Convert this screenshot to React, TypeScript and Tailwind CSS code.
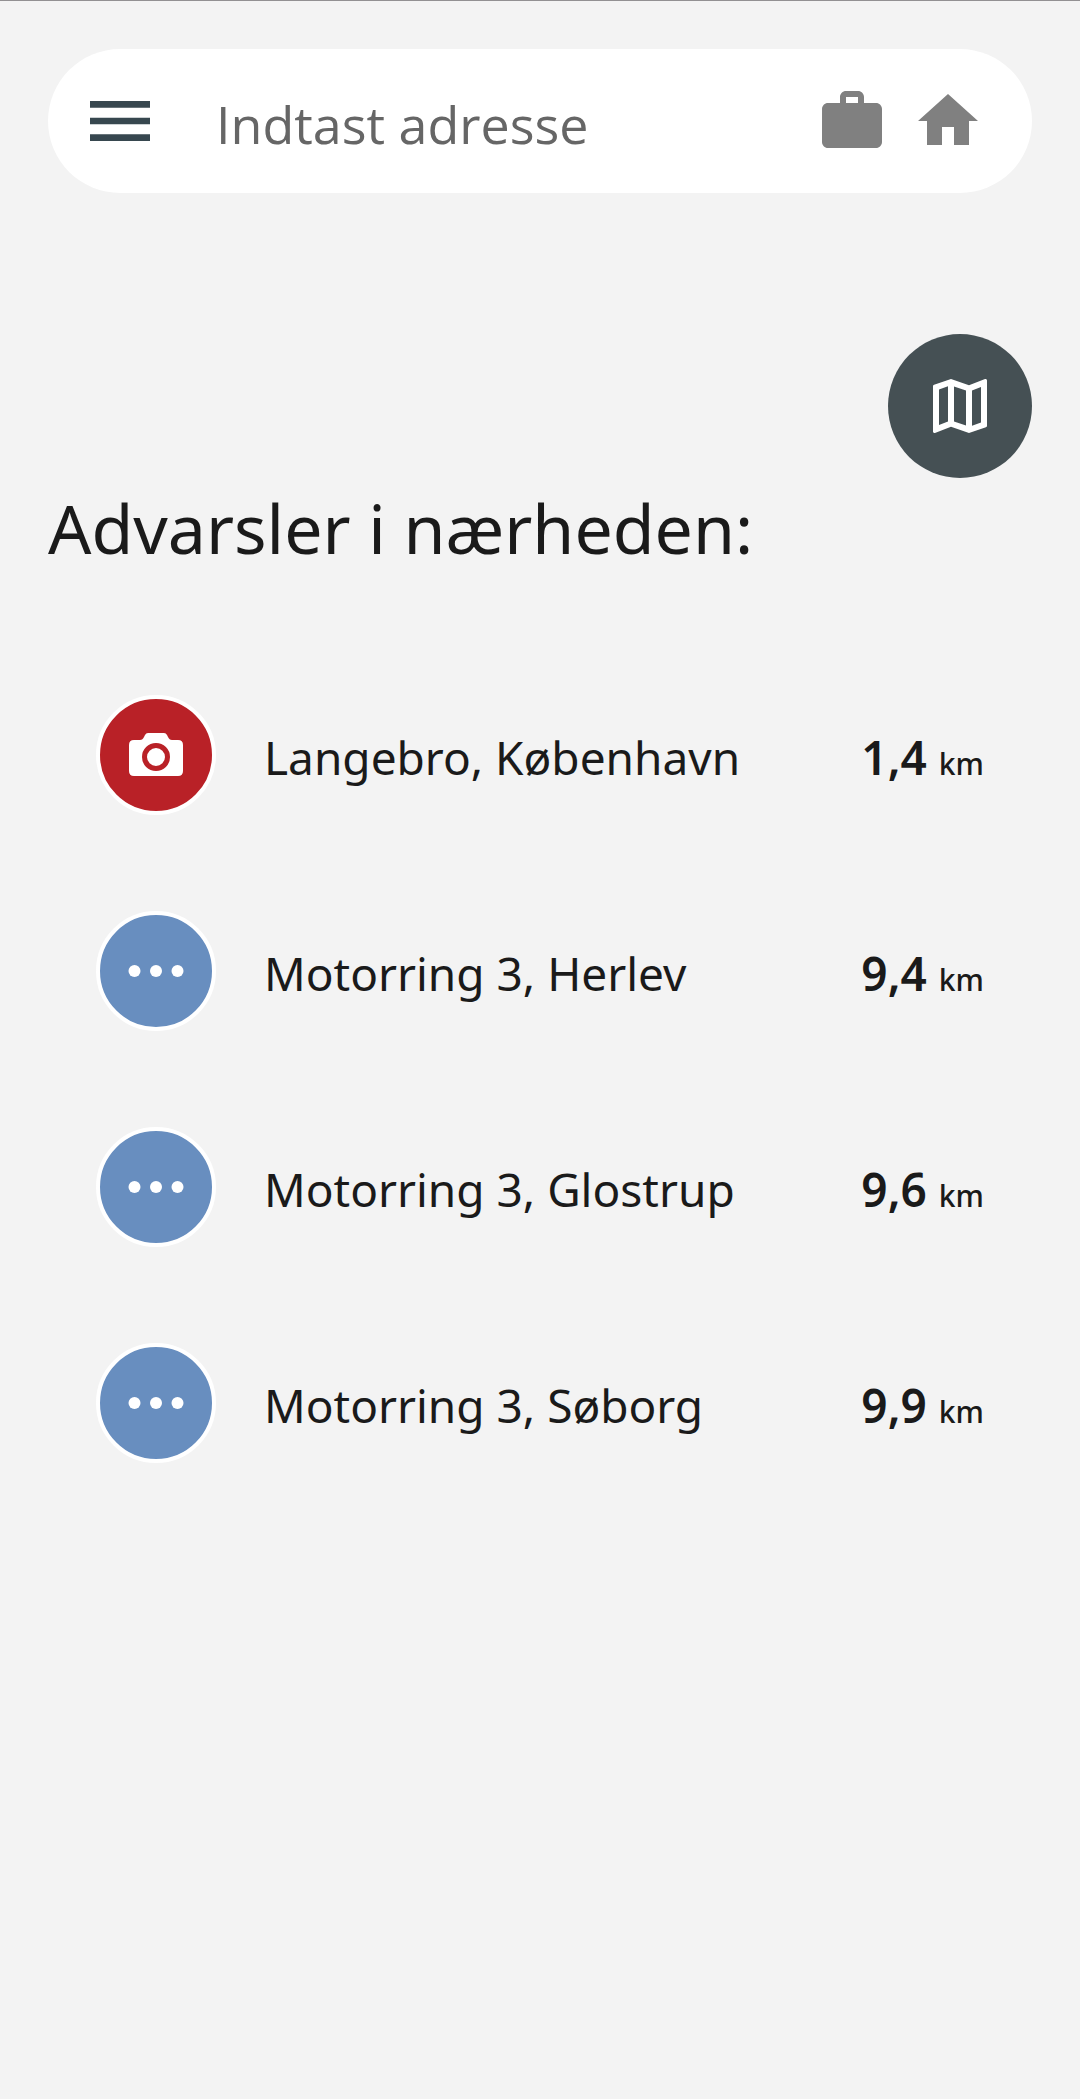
import React, { useState } from 'react';
import { MdHome, MdMenu, MdOutlineMap, MdWork } from 'react-icons/md';

type WarningType = 'camera' | 'other';

interface Warning {
  type: WarningType;
  place: string;
  distance: string;
}

const warnings: Warning[] = [
  { type: 'camera', place: 'Langebro, København', distance: '1,4' },
  { type: 'other', place: 'Motorring 3, Herlev', distance: '9,4' },
  { type: 'other', place: 'Motorring 3, Glostrup', distance: '9,6' },
  { type: 'other', place: 'Motorring 3, Søborg', distance: '9,9' },
];

const CameraIcon = () => (
  <svg width="54" height="44" viewBox="0 0 54 44" fill="none" aria-hidden="true">
    <path
      d="M5 7h6c2 0 3-1 4-3l1-2q1-2 3-2h16q2 0 3 2l1 2c1 2 2 3 4 3h6q5 0 5 5v26q0 5-5 5H5q-5 0-5-5V12q0-5 5-5z"
      fill="#fff"
    />
    <circle cx="27" cy="24" r="11.500" stroke="#b92127" strokeWidth="5" />
  </svg>
);

const DotsIcon = () => (
  <svg width="56" height="14" viewBox="0 0 56 14" fill="#fff" aria-hidden="true">
    <circle cx="6.500" cy="7" r="6" />
    <circle cx="28" cy="7" r="6" />
    <circle cx="49.500" cy="7" r="6" />
  </svg>
);

const SearchBar = () => {
  const [address, setAddress] = useState('');

  return (
    <form
      className="flex h-36 items-center rounded-full bg-white pr-12 pl-8"
      onSubmit={(e) => e.preventDefault()}
    >
      <button type="button" aria-label="Menu" className="shrink-0 text-[#37474f]">
        <MdMenu size={80} />
      </button>
      <input
        type="text"
        aria-label="Indtast adresse"
        placeholder="Indtast adresse"
        className="ml-14 h-20 min-w-0 flex-1 pt-1 font-['Open_Sans',sans-serif] text-[52px] text-[#1a1a1a] placeholder:text-[#666666] focus:outline-none"
        value={address}
        onChange={(e) => setAddress(e.target.value)}
      />
      <div className="flex shrink-0 gap-6 text-[#808080]">
        <button type="button" aria-label="Arbejde">
          <MdWork size={72} />
        </button>
        <button type="button" aria-label="Hjem">
          <MdHome size={72} />
        </button>
      </div>
    </form>
  );
};

const WarningRow = ({ warning }: { warning: Warning }) => {
  const isCamera = warning.type === 'camera';

  return (
    <li className="flex items-center py-12">
      <div
        className={`flex size-30 shrink-0 items-center justify-center rounded-full border-4 border-white ${
          isCamera ? 'bg-[#b92127]' : 'bg-[#688ebf]'
        }`}
      >
        {isCamera ? <CameraIcon /> : <DotsIcon />}
      </div>
      <div className="ml-12 flex flex-1 items-baseline pt-1">
        <span className="flex-1 text-[46px]">{warning.place}</span>
        <span className="text-[46px] font-semibold">{warning.distance}</span>
        <span className="ml-3 text-[30px] font-medium">km</span>
      </div>
    </li>
  );
};

export default function App() {
  return (
    <div className="min-h-screen border-t border-[#929092] bg-[#f3f3f3] px-12 pt-12 font-['Noto_Sans',sans-serif] text-[#1a1a1a]">
      <SearchBar />
      <main>
        <div className="mt-[141px] flex justify-end">
          <button
            type="button"
            aria-label="Vis kort"
            className="flex size-36 items-center justify-center rounded-full bg-[#455054] text-white"
          >
            <MdOutlineMap size={72} />
          </button>
        </div>
        <h1 className="mt-[10px] text-[68px] leading-[80px]">Advarsler i nærheden:</h1>
        <ul className="mt-[79px] px-12">
          {warnings.map((warning) => (
            <WarningRow key={warning.place} warning={warning} />
          ))}
        </ul>
      </main>
    </div>
  );
}
